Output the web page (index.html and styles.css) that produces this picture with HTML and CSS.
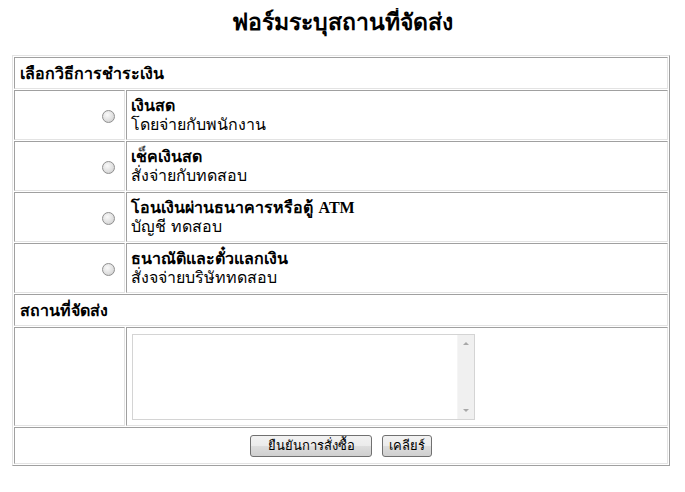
FILE: index.html
```html
<!DOCTYPE html>
<html>
<head>
<meta charset="utf-8">
<link rel="stylesheet" href="styles.css">
</head>
<body>
<h1 class="title">ฟอร์มระบุสถานที่จัดส่ง</h1>
<table class="form">
  <tr><td colspan="2" class="head">เลือกวิธีการชำระเงิน</td></tr>
  <tr>
    <td class="left"><span class="radio"></span></td>
    <td class="opt"><b>เงินสด</b><br>โดยจ่ายกับพนักงาน</td>
  </tr>
  <tr>
    <td class="left"><span class="radio"></span></td>
    <td class="opt"><b>เช็คเงินสด</b><br>สั่งจ่ายกับทดสอบ</td>
  </tr>
  <tr>
    <td class="left"><span class="radio"></span></td>
    <td class="opt"><b>โอนเงินผ่านธนาคารหรือตู้ <span class="latin">ATM</span></b><br>บัญชี ทดสอบ</td>
  </tr>
  <tr>
    <td class="left"><span class="radio"></span></td>
    <td class="opt"><b>ธนาณัติและตั๋วแลกเงิน</b><br>สั่งจจ่ายบริษัททดสอบ</td>
  </tr>
  <tr><td colspan="2" class="head">สถานที่จัดส่ง</td></tr>
  <tr>
    <td class="left"></td>
    <td class="areacell"><div class="textarea"><div class="sb"><span class="up"></span><span class="dn"></span></div></div></td>
  </tr>
  <tr>
    <td colspan="2" class="btns"><span class="btn wide">ยืนยันการสั่งซื้อ</span><span class="btn">เคลียร์</span></td>
  </tr>
</table>
</body>
</html>
```
FILE: styles.css
```css
body {
  margin: 8px;
  background: #fff;
  font-family: Tahoma, "DejaVu Sans", "Noto Sans", sans-serif;
  font-size: 16px;
  color: #000;
}
.title {
  font-family: "Liberation Serif", Tahoma, serif;
  font-size: 23px;
  font-weight: bold;
  text-align: center;
  margin: 0 0 17px;
  line-height: 30px;
}
.form {
  width: 658px;
  margin-left: 4px;
  border-collapse: separate;
  border-spacing: 1px;
  border: 1px solid;
  border-color: #e3e3e3 #a0a0a0 #a0a0a0 #e3e3e3;
}
.form td {
  border: 1px solid;
  border-color: #a0a0a0 #e3e3e3 #e3e3e3 #a0a0a0;
  padding: 0 4px;
  vertical-align: middle;
}
.head {
  height: 30px;
  font-weight: bold;
  padding-left: 5px !important;
}
.left {
  width: 101px;
  text-align: right;
}
.opt {
  height: 48px;
  line-height: 19px;
}
.latin {
  font-family: "Liberation Serif", serif;
  font-size: 16px;
}
.radio {
  display: inline-block;
  width: 11px;
  height: 11px;
  border: 1px solid #8f8f8f;
  border-radius: 50%;
  background: radial-gradient(circle at 40% 35%, #fafafa 0%, #dedede 60%, #c4c4c4 100%);
  margin-right: 5px;
  vertical-align: middle;
}
.areacell {
  height: 97px;
}
.textarea {
  width: 343px;
  height: 86px;
  border: 1px solid #d4d4d4;
  background: #fff;
  display: flex;
  justify-content: flex-end;
  box-sizing: border-box;
  margin-left: 1px;
}
.sb {
  width: 16px;
  background: #f0f0f0;
  position: relative;
  border-left: 1px solid #f5f5f5;
}
.up, .dn {
  position: absolute;
  left: 5px;
  width: 0;
  height: 0;
  border-left: 3px solid transparent;
  border-right: 3px solid transparent;
}
.up { top: 7px; border-bottom: 3px solid #a8a8a8; }
.dn { bottom: 7px; border-top: 3px solid #a8a8a8; }
.btns {
  height: 35px;
  text-align: center;
}
.btn {
  display: inline-block;
  box-sizing: border-box;
  height: 22px;
  line-height: 20px;
  padding: 0 6px;
  border: 1px solid #707070;
  border-radius: 3px;
  background: linear-gradient(#f2f2f2 0%, #ebebeb 50%, #dddddd 51%, #cfcfcf 100%);
  font-size: 13px;
  margin: 0 5px;
  vertical-align: middle;
}
.btn.wide {
  width: 122px;
}
```
